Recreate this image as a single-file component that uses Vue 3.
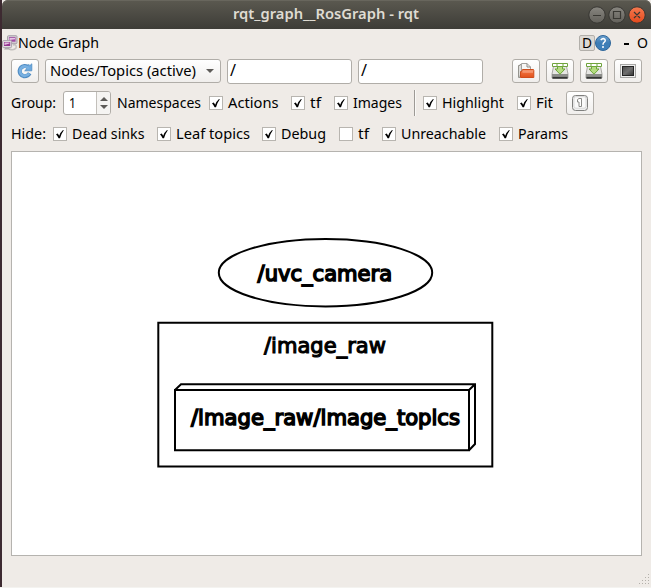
<script setup>
import { h } from 'vue'

// A line of text fitted to a fixed width
const Txt = (p) =>
  h('svg', { width: p.w, height: 20, class: 'txt' }, [
    h('text', { x: 0, y: 15, textLength: p.w, lengthAdjust: 'spacingAndGlyphs' }, p.t),
  ])
Txt.props = ['t', 'w']

// tw: text width, w: full width of the item
const optionsA = [
  { t: 'Actions', tw: 50.5, w: 82, on: true },
  { t: 'tf', tw: 11, w: 43, on: true },
  { t: 'Images', tw: 49, w: 80, on: true },
]
const optionsB = [
  { t: 'Highlight', tw: 62, w: 94, on: true },
  { t: 'Fit', tw: 17, w: 49, on: true },
]
const hidden = [
  { t: 'Dead sinks', tw: 72.5, w: 104, on: true },
  { t: 'Leaf topics', tw: 74, w: 105, on: true },
  { t: 'Debug', tw: 45, w: 77, on: true },
  { t: 'tf', tw: 11, w: 43, on: false },
  { t: 'Unreachable', tw: 85, w: 117, on: true },
  { t: 'Params', tw: 50, w: 70, on: true },
]

const Check = (p) =>
  h('span', { class: 'check', style: { width: p.o.w + 'px' } }, [
    h('svg', { width: 14, height: 14, viewBox: '0 0 14 14' }, [
      h('rect', { x: 0.5, y: 0.5, width: 13, height: 13, fill: '#fff', stroke: '#b8b5b0' }),
      p.o.on
        ? h('path', { d: 'M3 7.2L4.8 6.5L6.2 8.7Q7.5 5 10 2.9L10.8 3.3Q8.3 6.7 7 11.2L5.6 11.2Q4.7 9 3 7.2Z', fill: '#000' })
        : null,
    ]),
    h(Txt, { t: p.o.t, w: p.o.tw }),
  ])
Check.props = ['o']
</script>

<template>
  <div class="window">
    <header class="titlebar">
      <span class="title"><Txt t="rqt_graph__RosGraph - rqt" :w="186" /></span>
      <svg class="controls" width="58" height="18" viewBox="0 0 58 18">
        <defs>
          <linearGradient id="grey" x2="0" y2="1"><stop stop-color="#888680" /><stop offset="1" stop-color="#62605a" /></linearGradient>
          <linearGradient id="red" x2="0" y2="1"><stop stop-color="#f67a50" /><stop offset="1" stop-color="#e3491c" /></linearGradient>
        </defs>
        <g stroke="#373632"><circle cx="9" cy="9" r="8.2" fill="url(#grey)" /><circle cx="29" cy="9" r="8.2" fill="url(#grey)" /><circle cx="49" cy="9" r="8.2" fill="url(#red)" /></g>
        <path d="M5 9.5H13M25.5 5.5H32.5V12.5H25.5ZM46 6L52 12M52 6L46 12" fill="none" stroke="#393833" stroke-width="1.2" />
      </svg>
    </header>

    <div class="dock">
      <svg width="16" height="16" viewBox="0 0 16 16">
        <path d="M11 10Q15 9 14 13Q12 16 7 14" fill="none" stroke="#c3c0bd" stroke-width="1.5" />
        <rect x="5.5" y=".7" width="9.5" height="8" rx="1" fill="#d0cad0" stroke="#a8a2aa" />
        <rect x="7" y="2.2" width="6.5" height="4.5" fill="#a04aa3" /><path d="M7.5 3H13V4.3L7.5 5Z" fill="#e6c6e6" />
        <rect x=".6" y="5.6" width="9" height="7" rx="1" fill="#e0dce0" stroke="#a8a2aa" />
        <rect x="2" y="7" width="6.2" height="4" fill="#93358f" /><path d="M2.5 7.5H7.5V8.5L2.5 10Z" fill="#e2bde1" />
        <path d="M2 14.5H8L7 13H3Z" fill="#aaa6aa" />
      </svg>
      <Txt t="Node Graph" :w="81" />
      <div class="dock-right">
        <span class="dbtn"><Txt t="D" :w="10" /></span>
        <svg width="16" height="16" viewBox="0 0 16 16">
          <defs><linearGradient id="blue" x2="0" y2="1"><stop stop-color="#6da1ce" /><stop offset=".5" stop-color="#3d7db6" /><stop offset="1" stop-color="#3d7fb9" /></linearGradient></defs>
          <circle cx="8" cy="8" r="7.5" fill="url(#blue)" stroke="#2f669a" />
          <path d="M5.7 5Q8 2.7 9.8 4.3Q11 6 9 7.4Q8 8 8 9.7" fill="none" stroke="#fff" stroke-width="1.5" /><circle cx="8" cy="12" r="1" fill="#fff" />
        </svg>
        <b class="dash"></b>
        <Txt class="o" t="O" :w="11" />
      </div>
    </div>

    <div class="row main">
      <button class="btn">
        <svg width="18" height="18" viewBox="0 0 18 18">
          <path d="M13.7 11.3Q11.6 14.7 7.7 14.2Q3.5 13 3.6 8.8Q4.2 4.5 8.4 4Q11 3.8 13 5.8" fill="none" stroke="#4f8bc2" stroke-width="4" />
          <path d="M15.8 1.8V8.8H8.7L11 6.5L9.5 5L13 2.5L14 3.5Z" fill="#6ca9de" stroke="#4f8bc2" stroke-width=".8" />
          <path d="M13.2 11.5Q11.2 14.2 7.9 13.8Q4 12.8 4 8.8Q4.6 4.9 8.4 4.4Q11 4.2 13 6.8" fill="none" stroke="#78b0e1" stroke-width="2.6" />
        </svg>
      </button>
      <div class="combo"><Txt t="Nodes/Topics (active)" :w="146" /><i class="tri down"></i></div>
      <div class="input"><Txt t="/" :w="6" /></div>
      <div class="input"><Txt t="/" :w="6" /></div>
      <div class="tools">
        <button class="btn">
          <svg width="18" height="18" viewBox="0 0 18 18">
            <defs><linearGradient id="folder" x2="0" y2="1"><stop stop-color="#f5a27d" /><stop offset=".35" stop-color="#ef6c38" /><stop offset="1" stop-color="#df521d" /></linearGradient></defs>
            <path d="M1.5 15.5V3.5H3V2.5H8L10.5 5V13.5H3V15.5Z" fill="#dedddb" stroke="#96958f" /><path d="M4.5 12V1.5H10L13.5 5V12Z" fill="#f7f7f6" stroke="#a3a19d" /><path d="M10 1.5V5H13.5" fill="none" stroke="#8d8b87" />
            <path d="M4.5 9.5L5.5 7.5H16.5L16.8 8.5V15.5H3.5V9.5Z" fill="url(#folder)" stroke="#cf4c1b" />
            <path d="M5.5 10H16" stroke="#f8b092" />
          </svg>
        </button>
        <button v-for="n in 2" :key="n" class="btn">
          <svg width="18" height="18" viewBox="0 0 18 18">
            <path d="M3 2H15L17 12V16H1V12Z" fill="#e6e6e3" stroke="#aaa9a5" />
            <path d="M1 12H17V15.5Q17 16.5 16 16.5H2Q1 16.5 1 15.5Z" fill="#8d8e8b" />
            <path d="M1.5 15.8H16.5" stroke="#343534" stroke-width="1.8" />
            <path d="M1.5 1.5H16.5V4.5H1.5Z" fill="#fff" stroke="#6fa43c" />
            <path d="M6 2V4.5M12 2V4.5" stroke="#6fa43c" />
            <path d="M6.5 4.5H11.5V7H14L9 12.2L4 7H6.5Z" fill="#b4dc80" stroke="#6ea53b" />
          </svg>
        </button>
        <button class="btn">
          <svg width="18" height="18" viewBox="0 0 18 18">
            <defs><linearGradient id="screen" x2="1" y2="1"><stop stop-color="#4a4a4a" /><stop offset=".5" stop-color="#707070" /><stop offset="1" stop-color="#333" /></linearGradient></defs>
            <rect x="1.5" y="2.5" width="15" height="13" fill="#eee" stroke="#a7a7a5" /><rect x="3.5" y="4.5" width="11" height="9" fill="url(#screen)" stroke="#252525" />
          </svg>
        </button>
      </div>
    </div>

    <div class="row second">
      <Txt t="Group:" :w="45" />
      <div class="spin"><Txt t="1" :w="7" /><span class="arrows"><i class="tri up"></i><i class="tri down"></i></span></div>
      <Txt class="ns" t="Namespaces" :w="84" />
      <Check v-for="o in optionsA" :key="o.t" :o="o" />
      <i class="sep"></i>
      <Check v-for="o in optionsB" :key="o.t" :o="o" />
      <button class="btn">
        <svg width="18" height="18" viewBox="0 0 18 18">
          <rect x="1.5" y="1.5" width="15" height="15" rx="3" fill="#efefef" stroke="#7f7f7d" /><rect x="3" y="2.7" width="12" height="11.5" rx="2" fill="#fafafa" stroke="#ccc" stroke-width=".7" />
          <path d="M6.5 5.5L8 4.5H10.5V12.5H8V8H6.5Z" fill="#fff" stroke="#8b8b89" />
        </svg>
      </button>
    </div>

    <div class="row third">
      <Txt class="hide" t="Hide:" :w="35" />
      <Check v-for="(o, i) in hidden" :key="i" :o="o" />
    </div>

    <main class="view">
      <svg class="graph" width="629" height="403" viewBox="12 152 629 403">
        <g fill="none" stroke="#000" stroke-width="2">
          <ellipse cx="325.5" cy="272.7" rx="106.7" ry="33.7" />
          <path d="M158.3 322.8H492.3V466.5H158.3Z" />
          <path d="M175 390H469V450.3H175ZM175 390L181 384.2H475V444L469 450.3M469 390L475 384.2" />
        </g>
        <g class="names">
          <text x="257.6" y="280.6" textLength="134.5" lengthAdjust="spacingAndGlyphs">/uvc_camera</text>
          <text class="thin" x="264" y="352.7" textLength="122" lengthAdjust="spacingAndGlyphs">/image_raw</text>
          <text x="191" y="424.7" textLength="269" lengthAdjust="spacingAndGlyphs">/image_raw/image_topics</text>
        </g>
      </svg>
    </main>

    <footer class="status">
      <svg width="11" height="11" viewBox="0 0 11 11" fill="#b3b0aa">
        <path d="M9 0h1v1H9zM9 3h1v1H9zM6 3h1v1H6zM9 6h1v1H9zM6 6h1v1H6zM3 6h1v1H3zM9 9h1v1H9zM6 9h1v1H6zM3 9h1v1H3zM0 9h1v1H0z" />
      </svg>
    </footer>
  </div>
</template>

<style>
body { background: #f4f3f0; }
.txt { display: block; flex: none; overflow: visible; fill: currentColor; }
.check { display: flex; align-items: center; gap: 5px; flex: none; }
.check > svg:first-child { flex: none; }
</style>

<style scoped>
.window {
  box-sizing: border-box;
  width: 651px;
  height: 587px;
  border-left: 2px solid #3d2a31;
  background: #efebe7;
  color: #000;
  font: 14.5px "Noto Sans", sans-serif;
  display: flex;
  flex-direction: column;
}
.titlebar {
  height: 29px;
  flex: none;
  display: flex;
  justify-content: flex-end;
  align-items: center;
  border-radius: 6px 6px 0 0;
  background: linear-gradient(#5b5950, #3d3c37);
  box-shadow: inset 0 1px #68665d;
  color: #dfdbd2;
  font-weight: 600;
  font-size: 14px;
}
.title { margin: 0 169px 1px 0; }
.controls { margin-right: 5px; }
.dock { height: 28px; flex: none; display: flex; align-items: center; padding-right: 3px; }
.dock-right { margin-left: auto; display: flex; align-items: center; }
.dbtn {
  box-sizing: border-box;
  width: 16px;
  height: 16px;
  display: flex;
  align-items: center;
  justify-content: center;
  border: 1px solid #b2afaa;
  border-radius: 2px;
  background: #dedad5;
}
.dash { width: 5px; height: 2px; background: #000; margin: 2px 8px 0 13px; }
.row { display: flex; align-items: center; flex: none; padding: 0 9px; }
.main { height: 28px; gap: 6px; }
.btn, .combo, .input, .spin {
  box-sizing: border-box;
  height: 24px;
  border: 1px solid #b0ada8;
  border-radius: 3px;
  display: flex;
  align-items: center;
  flex: none;
}
.btn { width: 28px; padding: 0; justify-content: center; background: linear-gradient(#fff, #f0eeec); }
.combo { width: 176px; padding: 0 6px 0 4px; justify-content: space-between; background: linear-gradient(#fff, #f0eeec); }
.input { width: 125px; height: 25px; padding-left: 2px; background: #fff; font-size: 16px; }
.tools { display: flex; gap: 6px; margin-left: auto; }
.tri { width: 0; height: 0; border: 4px solid transparent; }
.tri.down { border-top: 4px solid #5d5b58; border-bottom: 0; }
.tri.up { border-bottom: 4px solid #5d5b58; border-top: 0; }
.second { height: 36px; }
.spin { width: 48px; margin-left: 7px; padding-left: 5px; justify-content: space-between; background: #fff; }
.arrows {
  width: 13px;
  height: 22px;
  border-left: 1px solid #c3c0bb;
  background: #f5f4f2;
  border-radius: 0 2px 2px 0;
  display: flex;
  flex-direction: column;
  justify-content: space-evenly;
  align-items: center;
}
.ns { margin: 0 8px 0 6px; }
.sep { width: 1px; height: 26px; background: #9d9a96; border-right: 1px solid #faf9f7; margin: 0 7px 0 0; }
.third { height: 25px; }
.hide { margin-right: 7px; }
.view {
  box-sizing: border-box;
  width: 631px;
  height: 405px;
  margin: 5px 0 0 9px;
  border: 1px solid #b5b3af;
  background: #fff;
  flex: none;
}
.graph { display: block; }
.names { font: 21px "DejaVu Sans", sans-serif; stroke: #000; stroke-width: 1.5; }
.names .thin { stroke-width: 1.1; }
.status { flex: 1; display: flex; align-items: flex-end; justify-content: flex-end; padding: 0 1px 2px 0; }
</style>
